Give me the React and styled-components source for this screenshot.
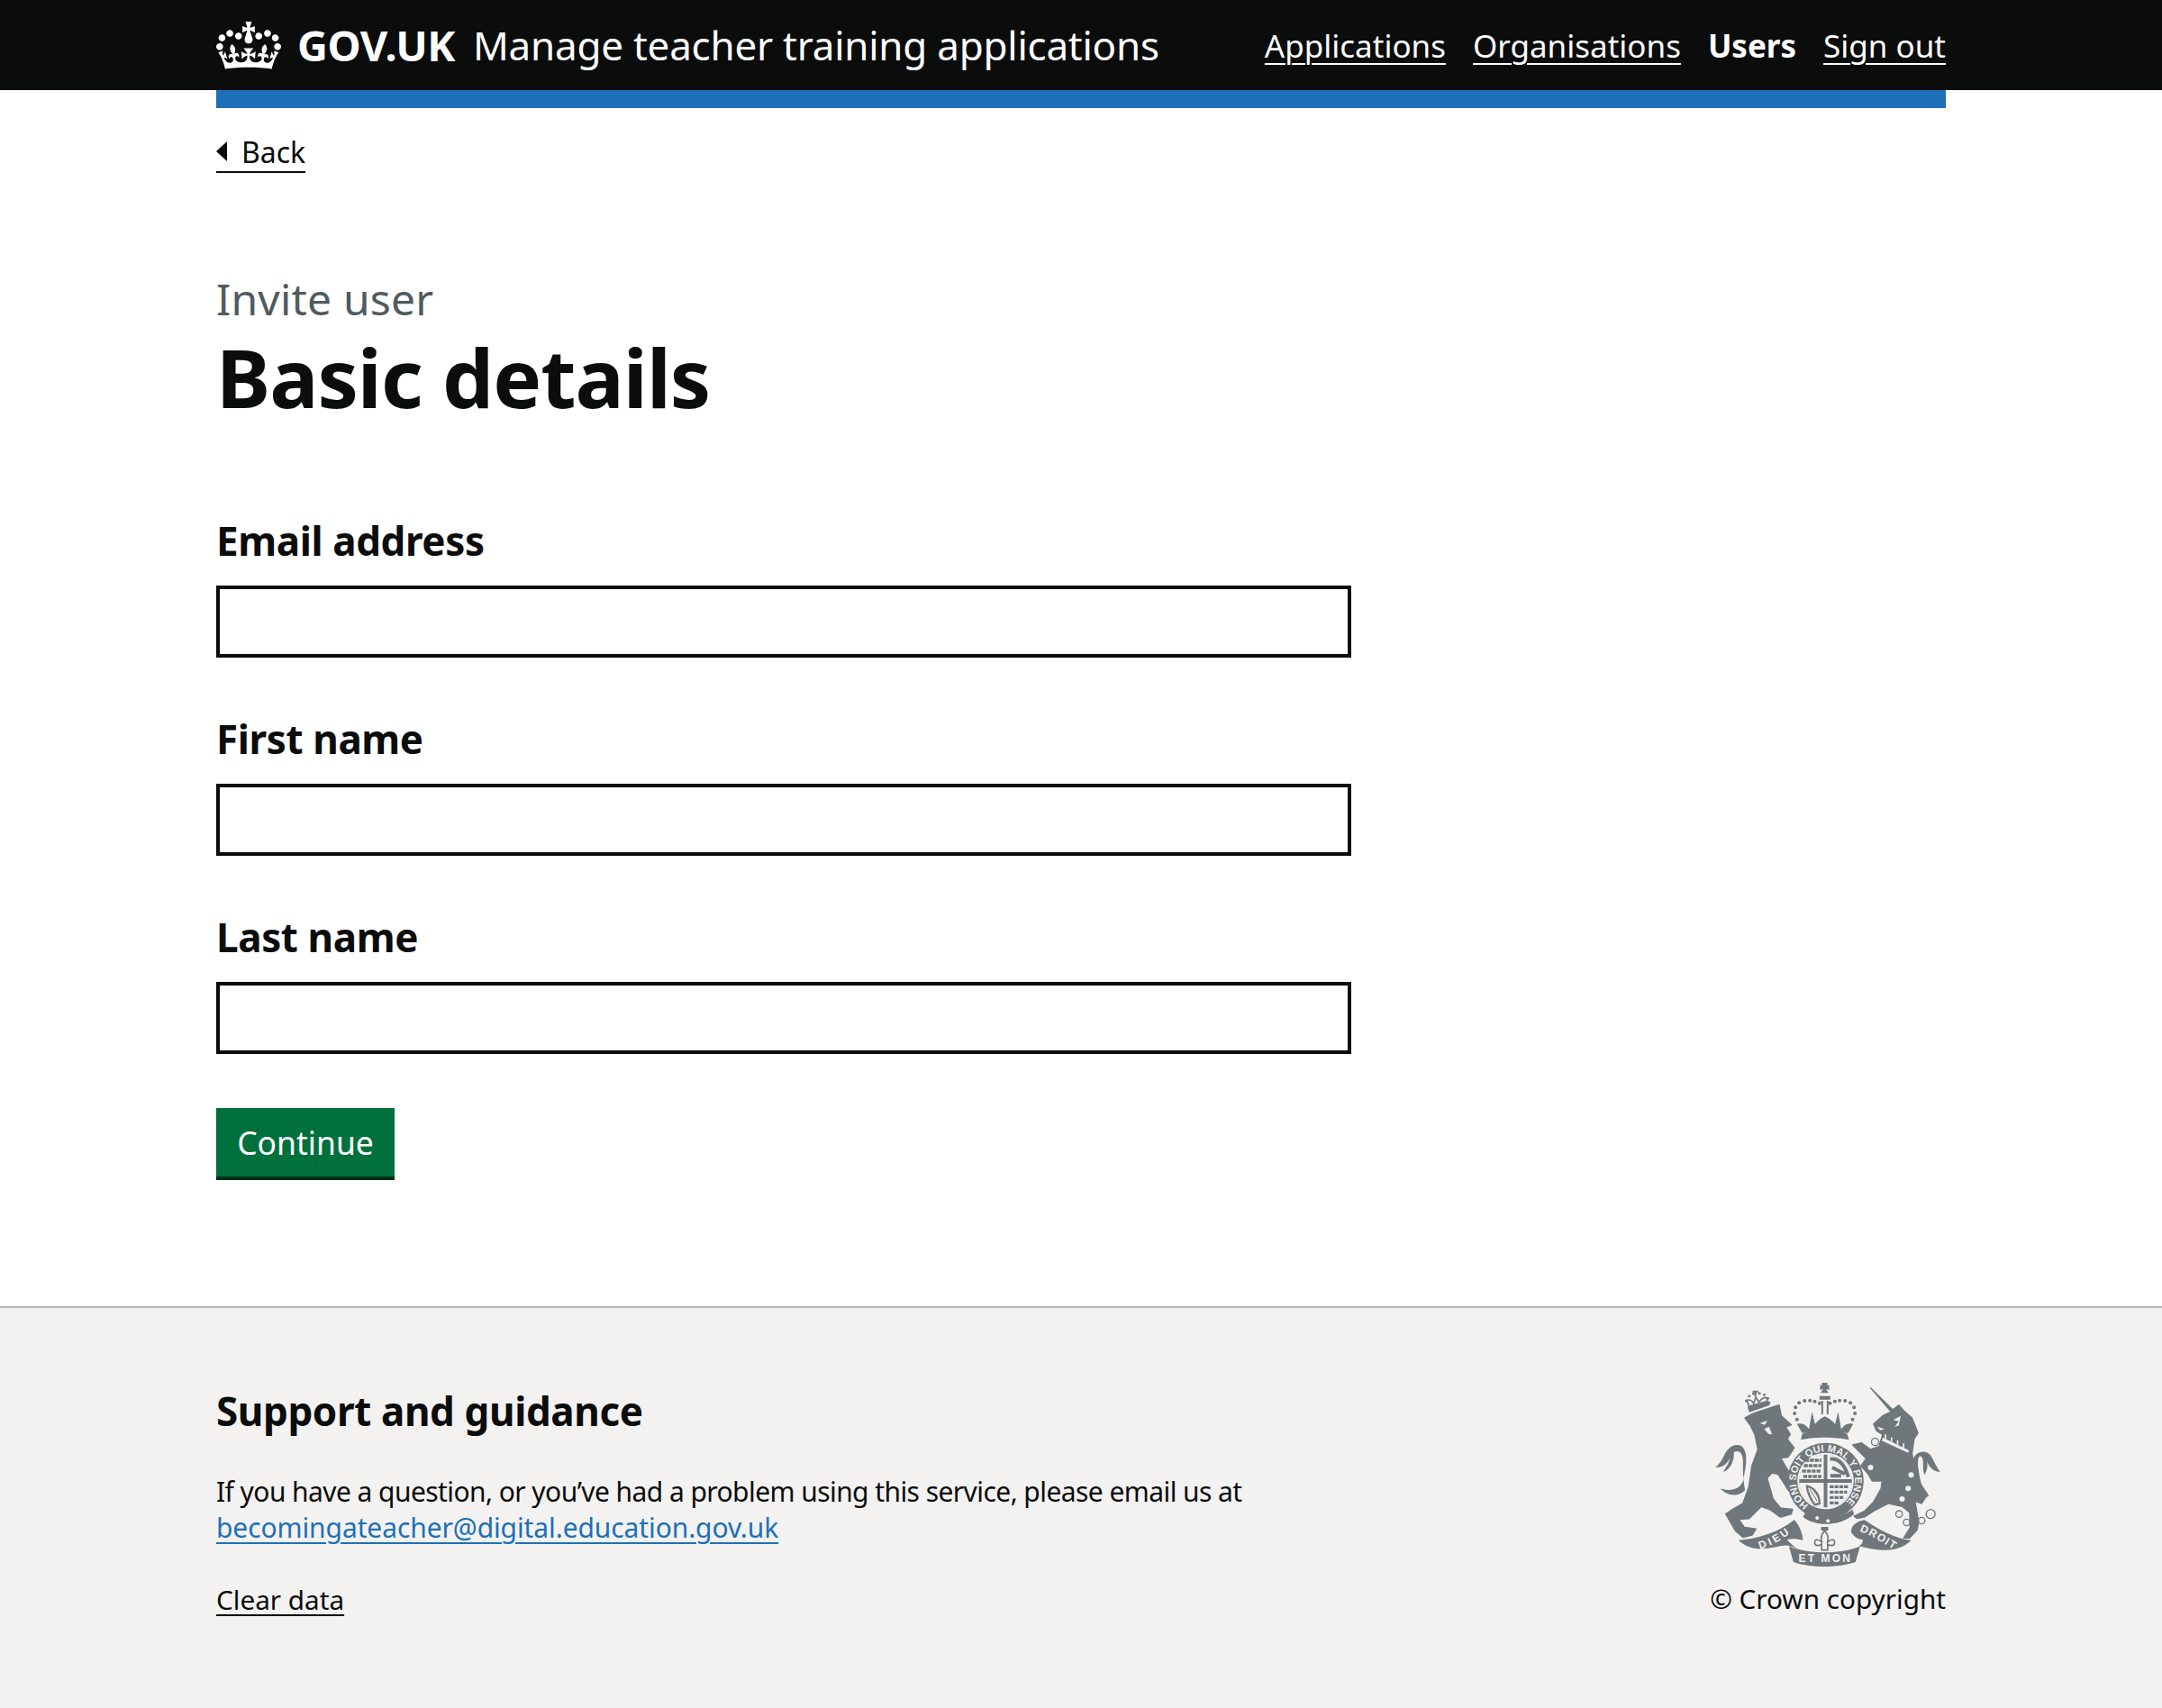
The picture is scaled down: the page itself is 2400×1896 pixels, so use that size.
import styled, { createGlobalStyle } from "styled-components";

const Global = createGlobalStyle`
html, body { margin: 0; padding: 0; background: #fff; }
body { font-family: "Noto Sans", Arial, sans-serif; color: #0b0c0c; }
`

const Container = styled.div`
width: 1920px;
margin: 0 auto;
`

const Header = styled.header`
background: #0b0c0c;
height: 100px;
`

const HeaderInner = styled(Container)`
display: flex;
align-items: center;
justify-content: space-between;
height: 100px;
color: #fff;
`

const Brand = styled.div`
display: flex;
align-items: center;
`

const Crown = styled.svg`
width: 72px;
height: 53px;
margin-right: 18px;
fill: #fff;
`

const Logotype = styled.span`
font-size: 47px;
font-weight: 700;
letter-spacing: -0.5px;
margin-right: 20px;
`

const ServiceName = styled.span`
font-size: 44px;
letter-spacing: -0.25px;
`

const Nav = styled.nav`
display: flex;
gap: 30px;
`

const NavLink = styled.a`
font-size: 35px;
color: #fff;
font-weight: ${(p) => (p.$active ? 700 : 400)};
text-decoration: ${(p) => (p.$active ? "none" : "underline")};
text-decoration-thickness: 2px;
text-underline-offset: 6px;
`

const Stripe = styled(Container)`
height: 20px;
background: #1d70b8;
`

const Back = styled.a`
display: inline-flex;
align-items: center;
box-sizing: border-box;
margin-top: 30px;
height: 42px;
padding-bottom: 4px;
font-size: 32px;
color: #0b0c0c;
border-bottom: 2px solid #0b0c0c;
`

const BackArrow = styled.span`
width: 0;
height: 0;
border-style: solid;
border-width: 11px 12px 11px 0;
border-color: transparent #0b0c0c transparent transparent;
margin-right: 16px;
`

const Main = styled.main`
padding-top: 110px;
padding-bottom: 140px;
`

const Caption = styled.span`
display: block;
font-size: 48px;
line-height: 60px;
letter-spacing: 0.2px;
color: #505a5f;
margin-bottom: 6px;
`

const Title = styled.h1`
margin: 0 0 102px;
font-size: 90.5px;
line-height: 100px;
font-weight: 700;
letter-spacing: -1px;
`

const Form = styled.form`
display: flex;
flex-direction: column;
align-items: flex-start;
`

const Group = styled.div`
margin-bottom: 60px;
`

const Label = styled.label`
display: block;
font-size: 44px;
line-height: 60px;
font-weight: 700;
margin-bottom: 20px;
letter-spacing: -0.4px;
`

const Input = styled.input`
display: block;
box-sizing: border-box;
width: 1260px;
height: 80px;
border: 4px solid #0b0c0c;
border-radius: 0;
padding: 10px;
background: #fff;
`

const Button = styled.button`
box-sizing: border-box;
height: 76px;
width: 198px;
margin-bottom: 4px;
padding: 0;
border: 0;
border-radius: 0;
background: #00703c;
box-shadow: 0 4px 0 #002d18;
color: #fff;
font-family: inherit;
font-size: 35.5px;
`

const Footer = styled.footer`
background: #f3f2f1;
border-top: 2px solid #b1b4b6;
height: 444px;
`

const FooterInner = styled(Container)`
display: flex;
justify-content: space-between;
align-items: flex-start;
padding-top: 74px;
`

const FooterHeading = styled.h2`
margin: 0 0 30px;
font-size: 44px;
line-height: 80px;
font-weight: 700;
letter-spacing: -0.4px;
`

const FooterText = styled.p`
margin: 0 0 40px;
font-size: 30px;
line-height: 40px;
letter-spacing: -0.57px;
`

const FooterMail = styled.a`
color: #1d70b8;
letter-spacing: -0.1px;
text-decoration: underline;
text-decoration-thickness: 2px;
text-underline-offset: 5px;
`

const FooterLink = styled.a`
font-size: 29.7px;
line-height: 40px;
color: #0b0c0c;
text-decoration: underline;
text-decoration-thickness: 2px;
text-underline-offset: 5px;
`

const Licence = styled.div`
display: flex;
flex-direction: column;
align-items: flex-end;
font-size: 29.7px;
line-height: 40px;
`

const Arms = styled.svg`
width: 252px;
height: 205px;
fill: #6f777b;
margin-top: 8px;
margin-bottom: 16px;
margin-right: 5px;
`

function CrownLogo() {
    return (
        <Crown viewBox="0 0 132 97" aria-hidden="true">
            <path fillRule="evenodd" d="M25 30.2c3.5 1.5 7.7-.2 9.1-3.7 1.5-3.6-.2-7.8-3.9-9.2-3.6-1.4-7.6.3-9.1 3.9-1.4 3.5.3 7.5 3.9 9zM9 39.5c3.6 1.5 7.8-.2 9.2-3.7 1.5-3.6-.2-7.8-3.9-9.1-3.6-1.5-7.6.2-9.1 3.8-1.4 3.5.3 7.5 3.8 9zM4.4 57.2c3.5 1.5 7.7-.2 9.1-3.8 1.5-3.6-.2-7.7-3.9-9.1-3.5-1.5-7.6.3-9.1 3.8-1.4 3.5.3 7.6 3.9 9.1zm38.3-21.4c3.5 1.5 7.7-.2 9.1-3.8 1.5-3.6-.2-7.7-3.9-9.1-3.6-1.5-7.6.3-9.1 3.8-1.3 3.6.4 7.7 3.9 9.1zm64.4-5.6c-3.6 1.5-7.8-.2-9.1-3.7-1.5-3.6.2-7.8 3.8-9.2 3.6-1.4 7.7.3 9.2 3.9 1.3 3.5-.4 7.5-3.9 9zm15.9 9.3c-3.6 1.5-7.7-.2-9.1-3.7-1.5-3.6.2-7.8 3.7-9.1 3.6-1.5 7.7.2 9.2 3.8 1.5 3.5-.3 7.5-3.8 9zm4.7 17.7c-3.6 1.5-7.8-.2-9.2-3.8-1.5-3.6.2-7.7 3.9-9.1 3.6-1.5 7.7.3 9.2 3.8 1.3 3.5-.4 7.6-3.9 9.1zM89.3 35.8c-3.6 1.5-7.8-.2-9.2-3.8-1.4-3.6.2-7.7 3.9-9.1 3.6-1.5 7.7.3 9.2 3.8 1.4 3.6-.3 7.7-3.9 9.1zM69.7 17.7l8.9 4.7V9.3l-8.9 2.8c-.2-.3-.5-.6-.9-.9L72.4 0H59.6l3.5 11.2c-.3.3-.6.5-.9.9l-8.8-2.8v13.1l8.8-4.7c.3.3.6.7.9.9l-5 15.4v.1c-.2.8-.4 1.6-.4 2.4 0 4.1 3.1 7.5 7 8.1h.2c.3 0 .7.1 1 .1.4 0 .7 0 1-.1h.2c4-.6 7.1-4.1 7.1-8.1 0-.8-.1-1.7-.4-2.4V34l-5.1-15.4c.4-.2.7-.6 1-.9zM66 92.8c16.9 0 32.8 1.1 47.1 3.2 4-16.9 8.9-26.7 14-33.5l-9.6-3.4c1 4.9 1.1 7.2 0 10.2-1.5-1.4-3-4.3-4.2-8.7L108.6 76c2.8-2 5-3.2 7.5-3.3-4.4 9.4-10 11.9-13.6 11.2-4.3-.8-6.3-4.6-5.6-7.9 1-4.7 5.7-5.9 8-.5 4.3-8.7-3-11.4-7.6-8.8 7.1-7.2 7.9-13.5 2.1-21.1-8 6.1-8.1 12.3-4.5 20.8-4.7-5.4-12.1-2.5-9.5 6.2 3.4-5.2 7.9-2 7.2 3.1-.6 4.3-6.4 7.8-13.5 7.2-10.3-.9-10.9-8-11.2-13.8 2.5-.5 7.1 1.8 11 7.3L80.2 60c-4.1 4.4-8 5.3-12.3 5.4 1.4-4.4 8-11.6 8-11.6H55.5s6.4 7.2 7.9 11.6c-4.2-.1-8-1-12.3-5.4l1.4 16.4c3.9-5.5 8.5-7.7 10.9-7.3-.3 5.8-.9 12.8-11.1 13.8-7.2.6-12.9-2.9-13.5-7.2-.7-5 3.8-8.3 7.1-3.1 2.7-8.7-4.6-11.6-9.4-6.2 3.7-8.5 3.6-14.7-4.6-20.8-5.8 7.6-5 13.9 2.2 21.1-4.7-2.6-11.9.1-7.7 8.8 2.3-5.5 7.1-4.2 8.1.5.7 3.3-1.3 7.1-5.7 7.9-3.5.7-9-1.8-13.5-11.2 2.5.1 4.7 1.3 7.5 3.3l-4.7-15.4c-1.2 4.4-2.7 7.2-4.3 8.7-1.1-3-.9-5.3 0-10.2l-9.5 3.4c5 6.9 9.9 16.7 14 33.5 14.8-2.1 30.8-3.2 47.7-3.2z" />
        </Crown>
    )
}

const ink = "#6f777b"
const paper = "#f3f2f1"
const mottoFont = "Liberation Sans, Arial, sans-serif"

const crownDots = [
    [345, 190], [337, 170], [340, 150], [352, 135], [370, 128], [388, 127], [404, 130], [420, 136],
    [530, 190], [538, 170], [535, 150], [523, 135], [505, 128], [487, 127], [471, 130], [455, 136],
]

const lionCrownDots = [[176, 128], [186, 112], [200, 104], [220, 103], [236, 108], [248, 120], [252, 134]]

const unicornSpots = [[725, 375], [715, 420], [695, 455], [590, 350]]

const chainRings = [[685, 505, 11], [710, 533, 11], [760, 527, 11], [790, 505, 15], [605, 265, 12]]

// hand traced royal arms, coordinates are in zoomed crop pixels
function RoyalArms() {
    return (
        <Arms viewBox="70 65 755 615" aria-hidden="true">
            {/* lion */}
            <g stroke={ink} strokeWidth="5" strokeLinejoin="round">
                <path d="M172 185L200 170L285 142L292 178L325 208L307 215L322 240L312 255L335 285L315 315L290 318L335 395L342 425L318 428L300 400L282 372L262 368L245 385L255 420L265 455L290 485L330 490L325 505L290 515L255 490L225 480L185 520L150 522L170 550L208 555L195 575L165 582L140 560L108 505L130 490L165 470L185 415L195 345L215 290L205 240L190 210Z" />
            </g>
            <path d="M222 202L246 194L238 208ZM236 222L252 214L262 240L250 238Z" fill={paper} />
            <path d="M172 425C150 450 110 445 90 420C120 430 155 425 165 395C175 350 185 300 160 278C135 268 112 285 100 315C92 330 82 345 72 350C95 352 112 340 122 318C118 340 105 352 100 365C125 355 135 330 135 300C150 290 165 300 165 330C165 360 165 390 172 425Z" />
            {/* lion crown */}
            <path d="M180 148L248 130L255 142L186 166Z" />
            <path d="M185 146L178 126C190 122 197 130 201 136L208 116L218 132C224 126 232 114 244 118L246 130Z" fill="none" stroke={ink} strokeWidth="5" />
            <path d="M203 112h7v-16h-7zM197 100h19v-6h-19z" />
            {lionCrownDots.map(([x, y]) => <circle key={`${x}${y}`} cx={x} cy={y} r="4.5" />)}
            {/* royal crown */}
            <path d="M428 68h18v10l6-4v18l-10-4 8 14h-26l8-14-10 4V74l6 4z" />
            <path d="M420 112h36v12h-36zM426 128h6v45h-6zM444 128h6v45h-6z" />
            {crownDots.map(([x, y]) => <circle key={`${x}${y}`} cx={x} cy={y} r="6" />)}
            <path d="M345 205C365 200 375 210 385 222L395 165L405 205C415 195 425 185 438 180C450 185 462 195 472 205L482 165L492 222C502 210 512 200 532 205L515 235H362Z" />
            <path d="M362 238C400 225 475 225 512 238L518 258C480 248 400 248 358 258Z" />
            {/* garter */}
            <circle cx="440" cy="395" r="127" />
            <circle cx="440" cy="395" r="94" fill={paper} />
            <defs>
                <path id="garterText" d="M383 475A98 98 0 1 1 508 465" />
            </defs>
            <text fontFamily={mottoFont} fontWeight="700" fontSize="33" fill={paper}>
                <textPath href="#garterText" textLength="480">HONI SOIT QUI MAL Y PENSE</textPath>
            </text>
            {/* shield quarters */}
            <circle cx="440" cy="395" r="88" />
            <path d="M434 389V307A88 88 0 0 0 352 389ZM446 389V307A88 88 0 0 1 528 389ZM434 401H352A88 88 0 0 0 434 483ZM446 401H528A88 88 0 0 1 446 483Z" fill={paper} />
            <path d="M372 326H426M368 344H426M362 362H426M366 380H426" stroke={ink} strokeWidth="10" fill="none" strokeDasharray="13 3" />
            <path d="M455 322C485 318 505 345 516 382M462 350L505 372M456 378H492" stroke={ink} strokeWidth="12" fill="none" />
            <path d="M378 412C405 418 420 442 420 470L404 474C392 458 380 436 378 412Z" fill="none" stroke={ink} strokeWidth="7" />
            <path d="M388 422L412 462M396 420L416 450" stroke={ink} strokeWidth="3" />
            <path d="M454 414H516M454 432H512M454 450H502M454 468H486" stroke={ink} strokeWidth="10" fill="none" strokeDasharray="13 3" />
            <path d="M372 500C400 520 480 525 530 490L535 505C490 545 410 550 365 515Z" />
            <circle cx="412" cy="518" r="6" fill={paper} />
            <circle cx="448" cy="528" r="6" fill={paper} />
            {/* unicorn */}
            <g stroke={ink} strokeWidth="4" strokeLinejoin="round">
                <path d="M590 85L664 158L684 142L700 160L728 185L748 235L735 255L728 305L735 340L750 395L780 440L760 470L738 462L750 530L745 558L720 585L700 585L722 550L720 500L695 480L650 470L600 495L570 515L545 520L535 512L570 495L600 465L625 420L628 395L595 395L582 372L558 345L575 320L560 305L530 275L560 268L590 290L618 280L630 240L610 228L600 205L630 178L658 164Z" />
            </g>
            <path d="M630 248L720 292L716 304L625 262Z" fill={paper} stroke={ink} strokeWidth="4" />
            <path d="M640 254V240M660 264V250M680 274V260M700 284V270" stroke={paper} strokeWidth="5" />
            <path d="M612 214L636 222L622 226ZM666 192L690 178L684 210L670 214L684 196Z" fill={paper} />
            <path d="M730 340C728 300 770 285 790 310C800 325 810 350 822 365C800 365 785 350 778 330C782 350 775 365 770 375C760 350 770 330 760 315C748 305 745 330 750 360C755 400 765 430 785 445C765 455 745 440 735 410Z" />
            {unicornSpots.map(([x, y]) => <circle key={`${x}${y}`} cx={x} cy={y} r="9" fill={paper} />)}
            {chainRings.map(([x, y, r]) => <circle key={`${x}${y}`} cx={x} cy={y} r={r} fill="none" stroke={ink} strokeWidth="4" />)}
            {/* motto ribbons */}
            <path d="M150 592C200 590 280 570 335 525C352 540 362 565 365 592C350 588 330 585 312 590C326 608 338 615 348 620L320 611C290 600 210 650 150 592Z" />
            <path d="M318 612C380 640 495 640 555 612L540 665C480 685 390 685 333 665Z" />
            <path d="M725 592C680 590 620 560 570 525C540 530 525 545 525 565C540 588 556 590 564 590C565 600 560 606 552 612C600 625 680 640 725 592Z" />
            <defs>
                <path id="dieuPath" d="M222 622C255 612 290 595 322 568" />
                <path id="droitPath" d="M553 563C590 575 630 600 665 622" />
            </defs>
            <text fontFamily={mottoFont} fontWeight="700" fontSize="36" fill={paper}>
                <textPath href="#dieuPath" textLength="112">DIEU</textPath>
            </text>
            <text fontFamily={mottoFont} fontWeight="700" fontSize="36" fill={paper}>
                <textPath href="#droitPath" textLength="128">DROIT</textPath>
            </text>
            <text x="350" y="665" fontFamily={mottoFont} fontWeight="700" fontSize="36" fill={paper} textLength="172">ET MON</text>
            {/* fleur de lis */}
            <path d="M425 548h24v12h-24z" />
            <path d="M437 560C450 575 450 590 445 600C455 590 470 585 470 600C470 615 450 610 447 605L447 625H427L427 605C424 610 404 615 404 600C404 585 419 590 429 600C424 590 424 575 437 560Z" fill="none" stroke={ink} strokeWidth="5" />
        </Arms>
    )
}

function App() {
    return (
        <>
            <Global />
            <Header>
                <HeaderInner>
                    <Brand>
                        <CrownLogo />
                        <Logotype>GOV.UK</Logotype>
                        <ServiceName>Manage teacher training applications</ServiceName>
                    </Brand>
                    <Nav>
                        <NavLink href="#">Applications</NavLink>
                        <NavLink href="#">Organisations</NavLink>
                        <NavLink $active>Users</NavLink>
                        <NavLink href="#">Sign out</NavLink>
                    </Nav>
                </HeaderInner>
            </Header>
            <Stripe />
            <Container>
                <Back>
                    <BackArrow />
                    Back
                </Back>
                <Main>
                    <Caption>Invite user</Caption>
                    <Title>Basic details</Title>
                    <Form onSubmit={(e) => e.preventDefault()}>
                        <Group>
                            <Label>Email address</Label>
                            <Input />
                        </Group>
                        <Group>
                            <Label>First name</Label>
                            <Input />
                        </Group>
                        <Group>
                            <Label>Last name</Label>
                            <Input />
                        </Group>
                        <Button>Continue</Button>
                    </Form>
                </Main>
            </Container>
            <Footer>
                <FooterInner>
                    <div>
                        <FooterHeading>Support and guidance</FooterHeading>
                        <FooterText>
                            If you have a question, or you’ve had a problem using this service, please email us at<br />
                            <FooterMail href="#">becomingateacher@digital.education.gov.uk</FooterMail>
                        </FooterText>
                        <FooterLink href="#">Clear data</FooterLink>
                    </div>
                    <Licence>
                        <RoyalArms />
                        <span>© Crown copyright</span>
                    </Licence>
                </FooterInner>
            </Footer>
        </>
    )
}

export default App;
